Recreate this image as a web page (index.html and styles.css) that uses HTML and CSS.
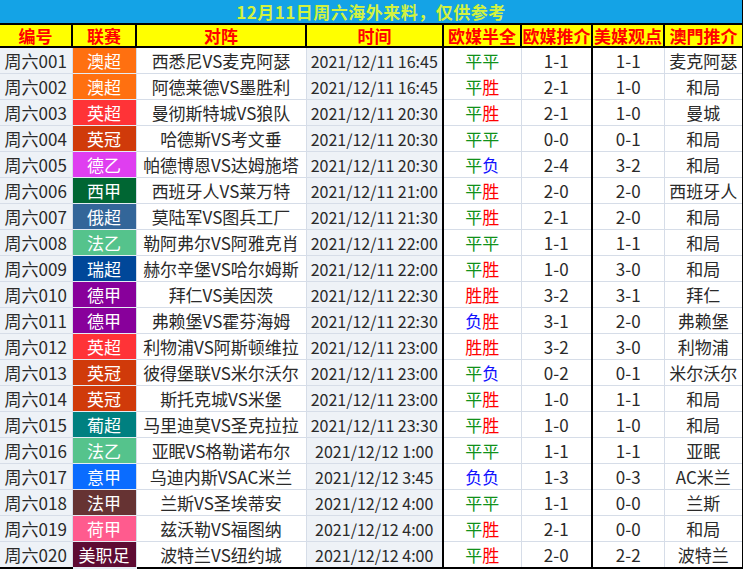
FILE: index.html
```html
<!DOCTYPE html>
<html lang="zh-CN">
<head>
<meta charset="utf-8">
<title>12月11日周六海外来料</title>
<link rel="stylesheet" href="styles.css">
</head>
<body>
<table class="sheet">
<colgroup>
<col class="c-id"><col class="c-lg"><col class="c-match"><col class="c-time"><col class="c-half"><col class="c-eu"><col class="c-us"><col class="c-mo">
</colgroup>
<thead>
<tr class="title-row"><th colspan="8"><span class="title-text">12月11日周六海外来料，仅供参考</span></th></tr>
<tr class="head-row"><th>编号</th><th>联赛</th><th>对阵</th><th>时间</th><th class="bl">欧媒半全</th><th>欧媒推介</th><th class="bl">美媒观点</th><th>澳門推介</th></tr>
</thead>
<tbody>
<tr><td class="id">周六001</td><td class="lg au">澳超</td><td>西悉尼VS麦克阿瑟</td><td class="tm">2021/12/11 16:45</td><td class="bl"><span class="d">平</span><span class="d">平</span></td><td>1-1</td><td class="bl">1-1</td><td>麦克阿瑟</td></tr>
<tr><td class="id">周六002</td><td class="lg au">澳超</td><td>阿德莱德VS墨胜利</td><td class="tm">2021/12/11 16:45</td><td class="bl"><span class="d">平</span><span class="w">胜</span></td><td>2-1</td><td class="bl">1-0</td><td>和局</td></tr>
<tr><td class="id">周六003</td><td class="lg epl">英超</td><td>曼彻斯特城VS狼队</td><td class="tm">2021/12/11 20:30</td><td class="bl"><span class="d">平</span><span class="w">胜</span></td><td>2-1</td><td class="bl">1-0</td><td>曼城</td></tr>
<tr><td class="id">周六004</td><td class="lg ch">英冠</td><td>哈德斯VS考文垂</td><td class="tm">2021/12/11 20:30</td><td class="bl"><span class="d">平</span><span class="d">平</span></td><td>0-0</td><td class="bl">0-1</td><td>和局</td></tr>
<tr><td class="id">周六005</td><td class="lg bl2">德乙</td><td>帕德博恩VS达姆施塔</td><td class="tm">2021/12/11 20:30</td><td class="bl"><span class="d">平</span><span class="l">负</span></td><td>2-4</td><td class="bl">3-2</td><td>和局</td></tr>
<tr><td class="id">周六006</td><td class="lg liga">西甲</td><td>西班牙人VS莱万特</td><td class="tm">2021/12/11 21:00</td><td class="bl"><span class="d">平</span><span class="w">胜</span></td><td>2-0</td><td class="bl">2-0</td><td>西班牙人</td></tr>
<tr><td class="id">周六007</td><td class="lg ru">俄超</td><td>莫陆军VS图兵工厂</td><td class="tm">2021/12/11 21:30</td><td class="bl"><span class="d">平</span><span class="w">胜</span></td><td>2-1</td><td class="bl">2-0</td><td>和局</td></tr>
<tr><td class="id">周六008</td><td class="lg l2">法乙</td><td>勒阿弗尔VS阿雅克肖</td><td class="tm">2021/12/11 22:00</td><td class="bl"><span class="d">平</span><span class="d">平</span></td><td>1-1</td><td class="bl">1-1</td><td>和局</td></tr>
<tr><td class="id">周六009</td><td class="lg se">瑞超</td><td>赫尔辛堡VS哈尔姆斯</td><td class="tm">2021/12/11 22:00</td><td class="bl"><span class="d">平</span><span class="w">胜</span></td><td>1-0</td><td class="bl">3-0</td><td>和局</td></tr>
<tr><td class="id">周六010</td><td class="lg bl1">德甲</td><td>拜仁VS美因茨</td><td class="tm">2021/12/11 22:30</td><td class="bl"><span class="w">胜</span><span class="w">胜</span></td><td>3-2</td><td class="bl">3-1</td><td>拜仁</td></tr>
<tr><td class="id">周六011</td><td class="lg bl1">德甲</td><td>弗赖堡VS霍芬海姆</td><td class="tm">2021/12/11 22:30</td><td class="bl"><span class="l">负</span><span class="w">胜</span></td><td>3-1</td><td class="bl">2-0</td><td>弗赖堡</td></tr>
<tr><td class="id">周六012</td><td class="lg epl">英超</td><td>利物浦VS阿斯顿维拉</td><td class="tm">2021/12/11 23:00</td><td class="bl"><span class="w">胜</span><span class="w">胜</span></td><td>3-2</td><td class="bl">3-0</td><td>利物浦</td></tr>
<tr><td class="id">周六013</td><td class="lg ch">英冠</td><td>彼得堡联VS米尔沃尔</td><td class="tm">2021/12/11 23:00</td><td class="bl"><span class="d">平</span><span class="l">负</span></td><td>0-2</td><td class="bl">0-1</td><td>米尔沃尔</td></tr>
<tr><td class="id">周六014</td><td class="lg ch">英冠</td><td>斯托克城VS米堡</td><td class="tm">2021/12/11 23:00</td><td class="bl"><span class="d">平</span><span class="w">胜</span></td><td>1-0</td><td class="bl">1-1</td><td>和局</td></tr>
<tr><td class="id">周六015</td><td class="lg pt">葡超</td><td>马里迪莫VS圣克拉拉</td><td class="tm">2021/12/11 23:30</td><td class="bl"><span class="d">平</span><span class="w">胜</span></td><td>1-0</td><td class="bl">1-0</td><td>和局</td></tr>
<tr><td class="id">周六016</td><td class="lg l2">法乙</td><td>亚眠VS格勒诺布尔</td><td class="tm">2021/12/12 1:00</td><td class="bl"><span class="d">平</span><span class="d">平</span></td><td>1-1</td><td class="bl">1-1</td><td>亚眠</td></tr>
<tr><td class="id">周六017</td><td class="lg sa">意甲</td><td>乌迪内斯VSAC米兰</td><td class="tm">2021/12/12 3:45</td><td class="bl"><span class="l">负</span><span class="l">负</span></td><td>1-3</td><td class="bl">0-3</td><td>AC米兰</td></tr>
<tr><td class="id">周六018</td><td class="lg l1">法甲</td><td>兰斯VS圣埃蒂安</td><td class="tm">2021/12/12 4:00</td><td class="bl"><span class="d">平</span><span class="d">平</span></td><td>1-1</td><td class="bl">0-0</td><td>兰斯</td></tr>
<tr><td class="id">周六019</td><td class="lg nl">荷甲</td><td>兹沃勒VS福图纳</td><td class="tm">2021/12/12 4:00</td><td class="bl"><span class="d">平</span><span class="w">胜</span></td><td>2-1</td><td class="bl">0-0</td><td>和局</td></tr>
<tr><td class="id">周六020</td><td class="lg mls">美职足</td><td>波特兰VS纽约城</td><td class="tm">2021/12/12 4:00</td><td class="bl"><span class="d">平</span><span class="w">胜</span></td><td>2-0</td><td class="bl">2-2</td><td>波特兰</td></tr>
</tbody>
</table>
</body>
</html>
```

FILE: styles.css
```css
html, body {
  margin: 0;
  padding: 0;
  background: #ffffff;
}

.sheet {
  border-collapse: collapse;
  table-layout: fixed;
  width: 743px;
  font-family: "Noto Sans CJK SC", "Microsoft YaHei", sans-serif;
  font-size: 17px;
  color: #2a2a2a;
}

.c-id { width: 72px; }
.c-lg { width: 64px; }
.c-match { width: 170px; }
.c-time { width: 137px; }
.c-half { width: 78px; }
.c-eu { width: 71px; }
.c-us { width: 72px; }
.c-mo { width: 79px; }

.sheet th,
.sheet td {
  padding: 0;
  text-align: center;
  white-space: nowrap;
  line-height: 1;
}

.title-row th {
  height: 23px;
  background: #14a3e6;
  color: #d2f23e;
  font-size: 17px;
  font-weight: bold;
  border-bottom: 2px solid #000000;
  border-right: 2px solid #000000;
}

.title-text {
  display: inline-block;
  line-height: 21px;
  letter-spacing: 0.5px;
}

.head-row th {
  height: 21px;
  background: #ffff00;
  color: #ff0000;
  font-size: 17px;
  font-weight: bold;
  border: 2px solid #000000;
}

.head-row th:first-child {
  border-left: none;
}

.sheet tbody td {
  height: 25px;
  border-top: 1px solid #d6dde8;
  border-bottom: 1px solid #d6dde8;
  border-right: 1px solid #d6dde8;
}

.sheet tbody tr:last-child td {
  border-bottom: 2px solid #000000;
}

.sheet tbody td:last-child {
  border-right: 2px solid #000000;
}

.sheet td.bl,
.sheet th.bl {
  border-left: 2px solid #000000;
}

.id,
.tm {
  background: #eef2f7;
}

.tm {
  font-size: 16px;
}

.lg {
  color: #ffffff;
  border-top-color: #e4ecf4 !important;
  border-bottom-color: #e4ecf4 !important;
}

.au { background: #ff7010; }
.epl { background: #ff3337; }
.ch { background: #d03a0a; }
.bl2 { background: #df3ef0; }
.liga { background: #006633; }
.ru { background: #336699; }
.l2 { background: #55c38c; }
.se { background: #004799; }
.bl1 { background: #88009b; }
.pt { background: #008080; }
.sa { background: #0a6cff; }
.l1 { background: #663333; }
.nl { background: #ff5b8e; }
.mls { background: #5e0b33; }

.d { color: #11911a; }
.w { color: #ff0000; }
.l { color: #1010ff; }
```
